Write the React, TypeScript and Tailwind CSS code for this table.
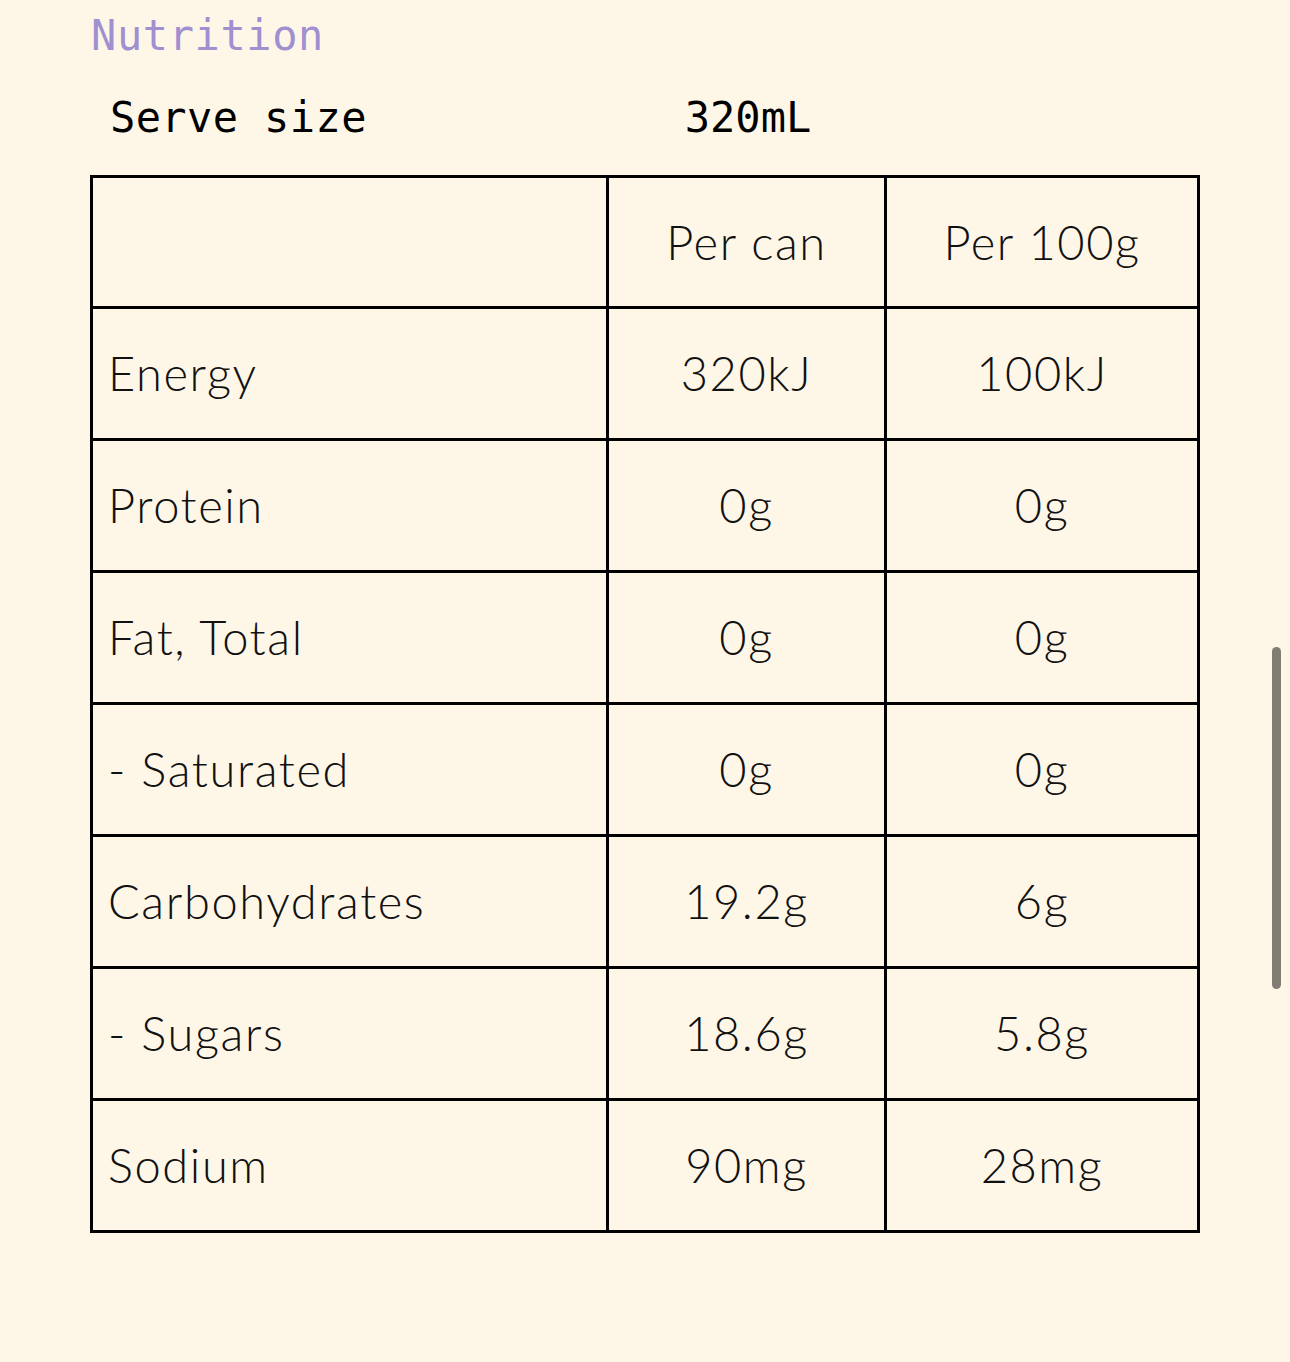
import React from "react";

const rows: [string, string, string][] = [
  ["Energy", "320kJ", "100kJ"],
  ["Protein", "0g", "0g"],
  ["Fat, Total", "0g", "0g"],
  ["- Saturated", "0g", "0g"],
  ["Carbohydrates", "19.2g", "6g"],
  ["- Sugars", "18.6g", "5.8g"],
  ["Sodium", "90mg", "28mg"],
];

export default function App() {
  return (
    <div className="relative min-h-[1362px] w-full bg-[#fef7e8] overflow-hidden">
      <div className="pl-[90px] pt-[8px]">
        <h2
          className="text-[42px] leading-[56px] tracking-[0.6px] text-[#a090d0] pl-[1px]"
          style={{ fontFamily: '"DejaVu Sans Mono", monospace' }}
        >
          Nutrition
        </h2>
        <div
          className="flex w-[1110px] h-[106px] items-center text-[42px] text-black"
          style={{ fontFamily: '"DejaVu Sans Mono", monospace' }}
        >
          <div className="w-[519px] pl-[20px] tracking-[0.4px]">Serve size</div>
          <div className="w-[278px] text-center">320mL</div>
        </div>
        <div
          className="mt-[5px] w-[1110px] border-[3px] border-black text-[#111] text-[47px] font-light tracking-[1.6px]"
          style={{ fontFamily: "Lato, sans-serif" }}
        >
          <div className="grid grid-cols-[516px_278px_310px] h-[131px] border-b-[3px] border-black">
            <div className="border-r-[3px] border-black"></div>
            <div className="border-r-[3px] border-black flex items-center justify-center">Per can</div>
            <div className="flex items-center justify-center">Per 100g</div>
          </div>
          {rows.map((r, i) => (
            <div
              key={r[0]}
              className={`grid grid-cols-[516px_278px_310px] ${
                i < rows.length - 1 ? "h-[132px] border-b-[3px] border-black" : "h-[129px]"
              }`}
            >
              <div className="border-r-[3px] border-black flex items-center pl-[15px]">{r[0]}</div>
              <div className="border-r-[3px] border-black flex items-center justify-center">{r[1]}</div>
              <div className="flex items-center justify-center">{r[2]}</div>
            </div>
          ))}
        </div>
      </div>
      <div className="absolute left-[1272px] top-[647px] w-[9px] h-[342px] rounded-full bg-[#817c74]"></div>
    </div>
  );
}
